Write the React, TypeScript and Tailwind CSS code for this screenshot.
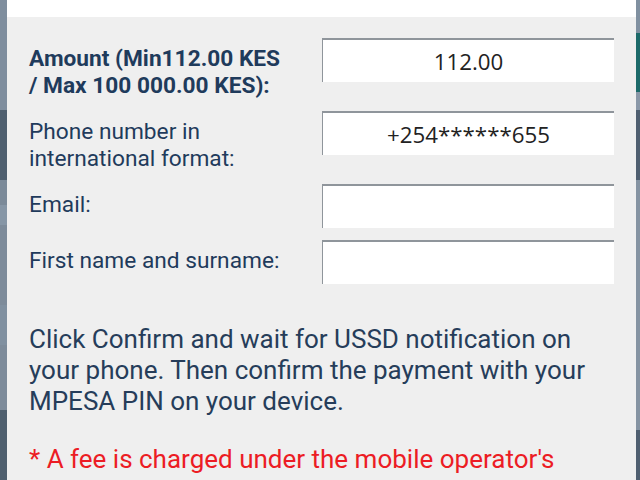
import type { ReactNode } from "react";

const LEFT_STRIP = [
  { h: 110, c: "bg-[#7f8e9e]" },
  { h: 70, c: "bg-[#4f5f6f]" },
  { h: 25, c: "bg-[#7b8a99]" },
  { h: 20, c: "bg-[#8696a6]" },
  { h: 80, c: "bg-[#7d8b9a]" },
  { h: 40, c: "bg-[#8090a0]" },
  { h: 65, c: "bg-[#7d8b9a]" },
  { h: 70, c: "bg-[#4f5f6e]" },
];

const RIGHT_STRIP = [
  { h: 33, c: "bg-[#8090a0]" },
  { h: 59, c: "bg-[#1d6a6a]" },
  { h: 18, c: "bg-[#8a98a8]" },
  { h: 70, c: "bg-[#4f5f70]" },
  { h: 250, c: "bg-[#8593a2]" },
  { h: 50, c: "bg-[#4f5f70]" },
];

function Row({ label, bold, value }: { label: ReactNode; bold?: boolean; value?: string }) {
  return (
    <div className="flex items-start justify-between">
      <label
        className={`w-[258px] pt-[7px] text-[22.7px] leading-[27px] text-[#1f3b5c] ${bold ? "font-bold" : ""}`}
      >
        {label}
      </label>
      <input
        readOnly
        value={value ?? ""}
        className="h-[44px] w-[292px] border-t-2 border-l border-r-0 border-b-0 border-[#8f959b] bg-white text-center text-[22.3px] text-[#222] outline-none"
        style={{ fontFamily: '"Open Sans", sans-serif' }}
      />
    </div>
  );
}

export default function App() {
  return (
    <div className="flex h-[480px] w-[640px] overflow-hidden" style={{ fontFamily: "Roboto, sans-serif" }}>
      <div className="flex w-[7px] shrink-0 flex-col">
        {LEFT_STRIP.map((s, i) => (
          <div key={i} className={s.c} style={{ height: s.h }} />
        ))}
      </div>

      <div className="flex min-w-0 flex-1 flex-col overflow-hidden bg-[#efefef]">
        <div className="h-[17px] shrink-0 bg-white" />
        <div className="flex flex-col px-[22px] pt-[21px]">
          <div className="flex flex-col gap-[12px]">
            <Row bold label="Amount (Min112.00 KES / Max 100 000.00 KES):" value="112.00" />
            <Row label="Phone number in international format:" value="+254******655" />
            <Row label="Email:" />
            <Row label="First name and surname:" />
          </div>

          <p className="mt-[40px] text-[26px] leading-[31px] text-[#263d5a]">
            Click Confirm and wait for USSD notification on your phone. Then confirm the payment with your MPESA PIN on
            your device.
          </p>
          <p className="mt-[26px] text-[26px] leading-[33px] text-[#ec1c24]">
            * A fee is charged under the mobile operator's tariff.
          </p>
        </div>
      </div>

      <div className="flex w-[4px] shrink-0 flex-col">
        {RIGHT_STRIP.map((s, i) => (
          <div key={i} className={s.c} style={{ height: s.h }} />
        ))}
      </div>
    </div>
  );
}
